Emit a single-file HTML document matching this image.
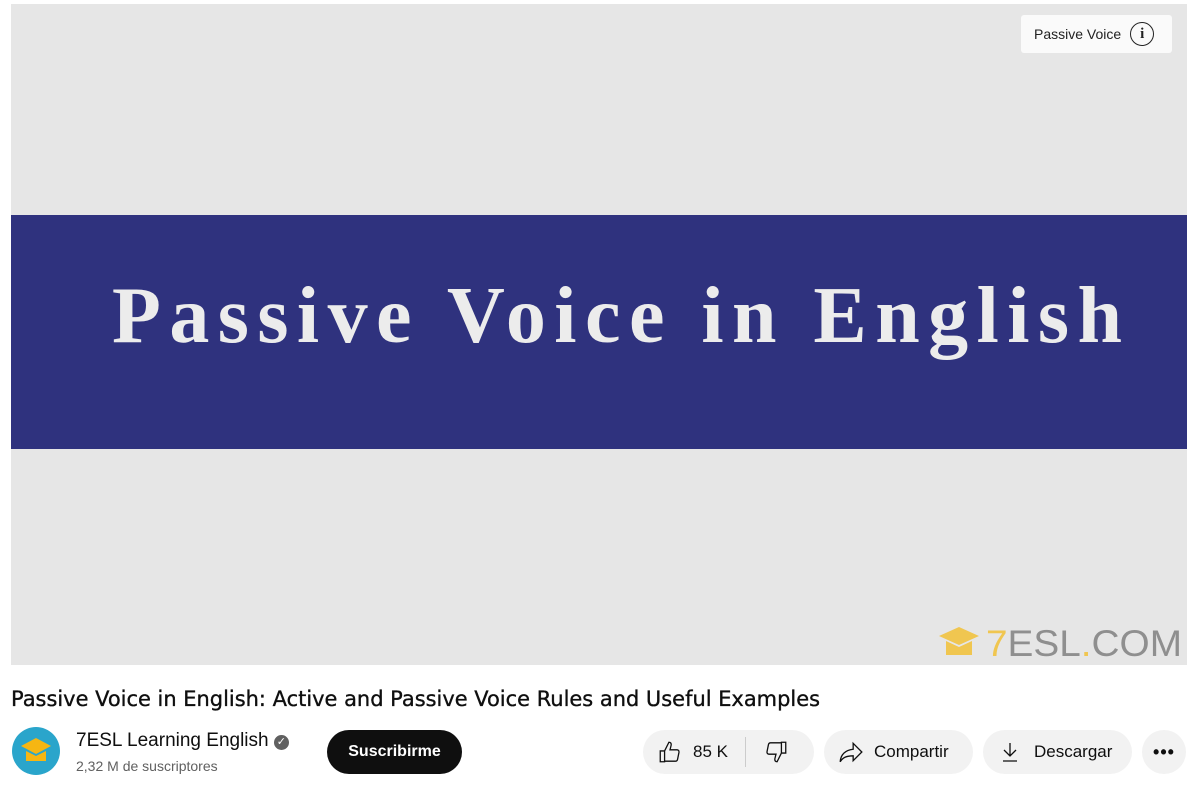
<!DOCTYPE html>
<html><head><meta charset="utf-8"><style>
body{margin:0;width:1187px;height:786px;background:#fff;font-family:"Liberation Sans",sans-serif;position:relative;overflow:hidden;color:#0f0f0f}
.vid{position:absolute;left:11px;top:4px;width:1176px;height:661px;background:#e6e6e6}
.band{position:absolute;left:0;top:211px;width:100%;height:234px;background:#2f327e}
.pill{position:absolute;background:#f2f2f2;border-radius:22px;height:44px;top:730px;display:flex;align-items:center;font-size:17px}
</style></head><body>
<div class="vid">
<div class="band"></div>
<svg style="position:absolute;left:0;top:0" width="1176" height="661">
<text x="101" y="338" font-family="Liberation Serif,serif" font-weight="bold" font-size="80" fill="#ececec" textLength="1010" lengthAdjust="spacing">Passive Voice in English</text>
<g transform="translate(928,620)"><path d="M0 12 L20 3 L40 12 L20 21Z" fill="#f0c650"/><path d="M7 17 v14 h26 v-14 l-13 6z" fill="#f0c650"/></g>
<text x="975" y="652" font-family="Liberation Sans,sans-serif" font-size="37" fill="#8f8f8f" textLength="196" lengthAdjust="spacingAndGlyphs"><tspan fill="#f0c650">7</tspan>ESL<tspan fill="#f0c650">.</tspan>COM</text>
</svg>
<div style="position:absolute;left:1010px;top:11px;width:151px;height:38px;background:#fafafa;border-radius:3px;font-size:14px;display:flex;align-items:center;padding-left:13px;box-sizing:border-box;color:#222">Passive Voice<span style="margin-left:9px;width:24px;height:24px;border:1.6px solid #222;border-radius:50%;box-sizing:border-box;display:flex;align-items:center;justify-content:center;font-weight:bold;font-size:15px;font-family:'Liberation Serif',serif">i</span></div>
</div>
<svg style="position:absolute;left:0;top:680px" width="900" height="40"><text x="11" y="26" font-family="DejaVu Sans,sans-serif" font-size="21" fill="#0f0f0f" stroke="#0f0f0f" stroke-width="0.35" textLength="809" lengthAdjust="spacingAndGlyphs">Passive Voice in English: Active and Passive Voice Rules and Useful Examples</text></svg>
<svg style="position:absolute;left:11px;top:726px" width="50" height="50"><circle cx="25" cy="25" r="24" fill="#2aa5cb"/><path d="M10 20 L25 12 L40 20 L25 28Z" fill="#f6b612"/><path d="M15 25 v10 h20 v-10 l-10 5z" fill="#f6b612"/></svg>
<div style="position:absolute;left:76px;top:730px;font-size:19px">7ESL Learning English <span style="display:inline-block;width:15px;height:15px;border-radius:50%;background:#606060;color:#fff;font-size:11px;text-align:center;line-height:15px;vertical-align:1px">✓</span></div>
<div style="position:absolute;left:76px;top:758px;font-size:14px;color:#606060">2,32 M de suscriptores</div>
<div style="position:absolute;left:327px;top:730px;width:135px;height:44px;border-radius:22px;background:#0f0f0f;color:#fff;font-weight:bold;font-size:16px;display:flex;align-items:center;justify-content:center">Suscribirme</div>
<div class="pill" style="left:643px;width:171px">
<svg style="margin-left:14px" width="26" height="26" viewBox="0 0 24 24" fill="none" stroke="#0f0f0f" stroke-width="1.2"><path d="M3 11h4v10H3zM7 11l4-8c1.5 0 2.5 1 2 3l-1 4h6.5c1.2 0 2 1 1.8 2.2l-1.3 6.5c-.2 1-1 1.8-2 1.8H7"/></svg>
<span style="margin-left:10px">85 K</span>
<span style="margin-left:17px;width:1px;height:30px;background:#ccc"></span>
<svg style="margin-left:17px" width="26" height="26" viewBox="0 0 24 24" fill="none" stroke="#0f0f0f" stroke-width="1.2"><path d="M21 13h-4V3h4zM17 13l-4 8c-1.5 0-2.5-1-2-3l1-4H5.5c-1.2 0-2-1-1.8-2.2L5 5.3C5.2 4.3 6 3.5 7 3.5h10"/></svg>
</div>
<div class="pill" style="left:824px;width:149px">
<svg style="margin-left:14px" width="26" height="26" viewBox="0 0 24 24" fill="none" stroke="#0f0f0f" stroke-width="1.2"><path d="M14 4l8 8-8 8v-4.5C8 15.5 4.5 17 2 21c.5-6 4-10.5 12-11.5z"/></svg>
<span style="margin-left:10px">Compartir</span></div>
<div class="pill" style="left:983px;width:149px">
<svg style="margin-left:15px" width="24" height="24" viewBox="0 0 24 24" fill="none" stroke="#0f0f0f" stroke-width="1.3"><path d="M12 3v13M6 10l6 6 6-6M5 21h14"/></svg>
<span style="margin-left:12px">Descargar</span></div>
<div class="pill" style="left:1142px;width:44px;justify-content:center;font-weight:bold;font-size:18px;letter-spacing:1px">•••</div>
</body></html>
